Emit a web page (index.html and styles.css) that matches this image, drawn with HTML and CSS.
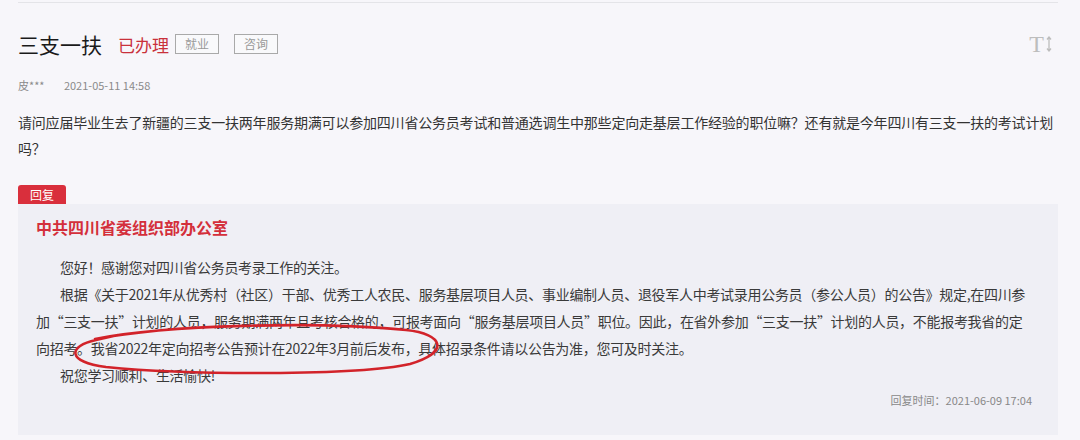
FILE: index.html
```html
<!DOCTYPE html>
<html lang="zh-CN">
<head>
  <meta charset="UTF-8" />
  <title>三支一扶 — 留言详情</title>
  <link rel="stylesheet" href="styles.css">
</head>
<body>
<div class="page">
  <div class="top-rule"></div>

  <!-- ===== Question ===== -->
  <div class="head">
    <h1 class="title">三支一扶</h1>
    <span class="status">已办理</span>
    <span class="tag">就业</span>
    <span class="tag">咨询</span>
    <span class="font-size" title="字号">
      <span class="font-size-t">T</span>
      <svg width="6" height="16" viewBox="0 0 6 16">
        <path d="M3 1 V15 M1 3.5 L3 1 L5 3.5 M1 12.5 L3 15 L5 12.5" fill="none" stroke="#bdbdbd" stroke-width="1.3"/>
      </svg>
    </span>
  </div>

  <div class="meta">
    <span class="author">皮***</span>
    <span class="date">2021-05-11 14:58</span>
  </div>

  <p class="question">请问应届毕业生去了新疆的三支一扶两年服务期满可以参加四川省公务员考试和普通选调生中那些定向走基层工作经验的职位嘛？还有就是今年四川有三支一扶的考试计划吗？</p>

  <!-- ===== Reply ===== -->
  <div class="reply-tab">回复</div>
  <div class="reply">
    <div class="reply-from">中共四川省委组织部办公室</div>
    <p class="reply-text">您好！感谢您对四川省公务员考录工作的关注。</p>
    <p class="reply-text">根据《关于2021年从优秀村（社区）干部、优秀工人农民、服务基层项目人员、事业编制人员、退役军人中考试录用公务员（参公人员）的公告》规定,在四川参加“三支一扶”计划的人员，服务期满两年且考核合格的，可报考面向“服务基层项目人员”职位。因此，在省外参加“三支一扶”计划的人员，不能报考我省的定向招考。我省2022年定向招考公告预计在2022年3月前后发布，具体招录条件请以公告为准，您可及时关注。</p>
    <p class="reply-text">祝您学习顺利、生活愉快!</p>
    <div class="reply-time">回复时间：2021-06-09 17:04</div>

    <svg class="mark" width="400" height="60" viewBox="0 0 400 60">
      <path d="M29 17 C 100 3, 250 -1, 340 8 C 378 12, 384 30, 344 42 C 290 54, 120 53, 40 45 C 0 40, 2 24, 30 18 L 52 13"
            fill="none" stroke="#d2232a" stroke-width="2.6" stroke-linecap="round"/>
    </svg>
  </div>
</div>
</body>
</html>
```

FILE: styles.css
```css
* {
  box-sizing: border-box;
}

body {
  margin: 0;
  background-color: #f7f6fa;
  color: #333333;
  font-family: "Noto Sans CJK SC", "Liberation Sans", sans-serif;
}

.page {
  padding: 0 22px 0 18px;
}

.top-rule {
  margin-top: 2px;
  border-top: 1px solid #e4e4e8;
}

/* ===== Question ===== */
.head {
  display: flex;
  align-items: center;
  margin-top: 26px;
  height: 30px;
}

.title {
  margin: 0;
  font-size: 21px;
  font-weight: normal;
  color: #1a1a1a;
}

.status {
  margin-left: 16px;
  margin-right: 6px;
  font-size: 17px;
  color: #c9313b;
}

.tag {
  margin-right: 15px;
  padding: 0 9px;
  border: 1px solid #a9a9a9;
  font-size: 12px;
  line-height: 18px;
  color: #999999;
  background-color: #f9f9fb;
}

.font-size {
  margin-left: auto;
  margin-right: 6px;
  display: flex;
  align-items: center;
  gap: 2px;
}

.font-size-t {
  font-family: "Liberation Serif", serif;
  font-size: 24px;
  color: #bdbdbd;
  line-height: 1;
}

.meta {
  margin-top: 18px;
  font-size: 11px;
  color: #8a8a8a;
}

.date {
  margin-left: 17px;
}

.question {
  margin: 16px 0 0;
  font-size: 14px;
  line-height: 26px;
  letter-spacing: -0.2px;
  color: #333333;
}

/* ===== Reply ===== */
.reply-tab {
  margin-top: 24px;
  width: 48px;
  height: 19px;
  border-radius: 3px 3px 0 0;
  background-color: #d92f3c;
  color: #ffffff;
  font-size: 12px;
  line-height: 19px;
  text-align: center;
}

.reply {
  position: relative;
  padding: 10px 26px 10px 18px;
  background-color: #efeff5;
  height: 231px;
}

.reply-from {
  font-size: 16px;
  font-weight: bold;
  color: #d42f3b;
  line-height: 26px;
  margin-bottom: 14px;
}

.reply-text {
  margin: 0;
  font-size: 14px;
  line-height: 27px;
  text-indent: 24px;
  letter-spacing: -0.3px;
  color: #3a3a3a;
}

.reply-time {
  margin-top: 3px;
  text-align: right;
  font-size: 11px;
  color: #888888;
}

/* hand-drawn annotation over the text */
.mark {
  position: absolute;
  left: 48px;
  top: 118px;
}
```
